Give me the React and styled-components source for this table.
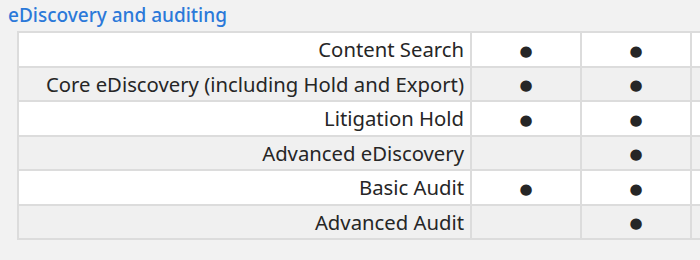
import styled, { createGlobalStyle } from "styled-components";

const GlobalStyle = createGlobalStyle`
  html, body {
    margin: 0;
    padding: 0;
    background: #f2f2f2;
    overflow: hidden;
  }
  body {
    font-family: "Noto Sans", "Open Sans", sans-serif;
    color: #262626;
  }
`;

const Page = styled.div`
  width: 700px;
  height: 260px;
  padding: 2px 0 0 8px;
  box-sizing: border-box;
  overflow: hidden;
`;

const Title = styled.h2`
  margin: 0 0 3px 0;
  font-size: 19px;
  font-weight: 500;
  line-height: 26px;
  color: #2b79d9;
`;

const Grid = styled.div`
  margin-left: 9px;
  display: grid;
  grid-template-columns: 451px 108px 108px 60px;
  grid-auto-rows: 32.5px;
  gap: 2px;
  padding: 2px;
  background: #dcdcdc;
  width: max-content;
`;

const Cell = styled.div`
  background: ${(p) => (p.$alt ? "#f0f0f0" : "#ffffff")};
  display: flex;
  align-items: center;
  justify-content: ${(p) => (p.$label ? "flex-end" : "center")};
  padding: ${(p) => (p.$label ? "0 6px 0 0" : "0")};
  font-size: 20.3px;
  white-space: nowrap;
  overflow: hidden;
`;

const Dot = styled.span`
  font-family: "DejaVu Sans", sans-serif;
  font-size: 15px;
  line-height: 1;
  padding-top: 4px;
  color: #262626;
`;

const rows = [
  ["Content Search", true, true],
  ["Core eDiscovery (including Hold and Export)", true, true],
  ["Litigation Hold", true, true],
  ["Advanced eDiscovery", false, true],
  ["Basic Audit", true, true],
  ["Advanced Audit", false, true],
];

export default function App() {
  return (
    <>
      <GlobalStyle />
      <Page>
        <Title>eDiscovery and auditing</Title>
        <Grid>
          {rows.map(([label, ...marks], i) => (
            <>
              <Cell key={label} $label $alt={i % 2 === 1}>
                {label}
              </Cell>
              {marks.map((m, j) => (
                <Cell key={label + j} $alt={i % 2 === 1}>
                  {m && <Dot>●</Dot>}
                </Cell>
              ))}
              <Cell key={label + "x"} $alt={i % 2 === 1} />
            </>
          ))}
        </Grid>
      </Page>
    </>
  );
}
